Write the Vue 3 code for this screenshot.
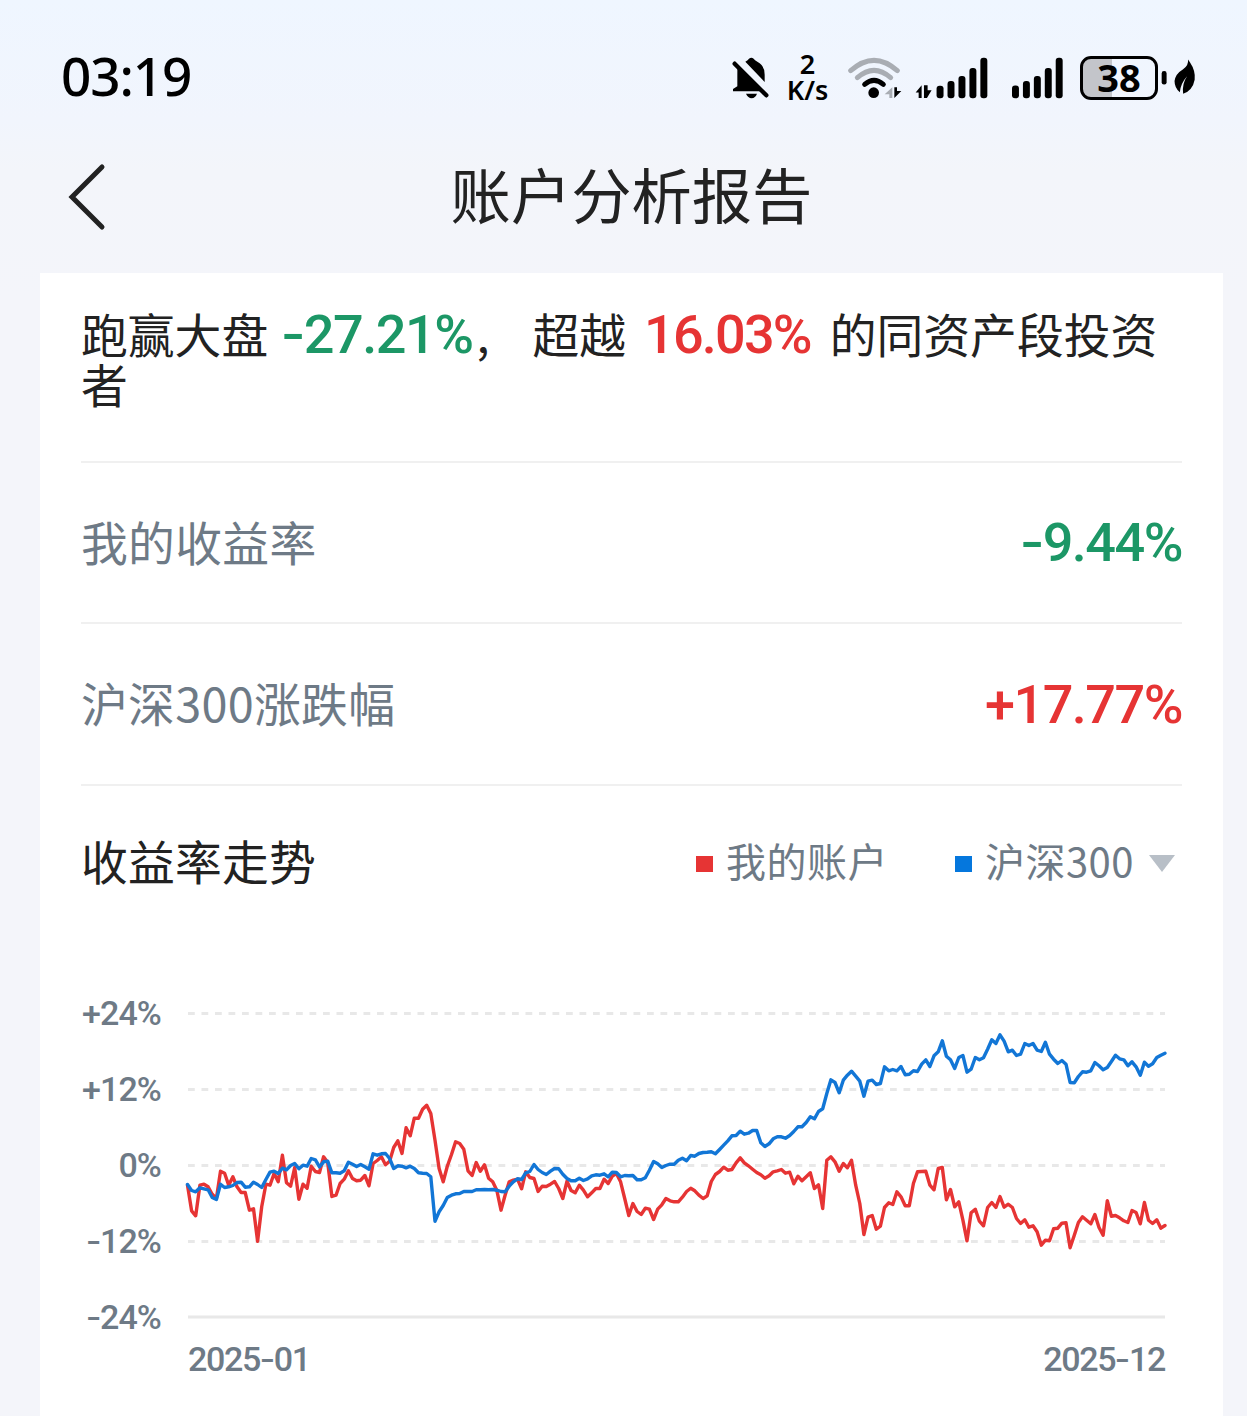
<template>
  <div class="page">
    <div class="status-bar">
      <div class="clock">03:19</div>
      <div class="status-icons">
        <svg class="bell" viewBox="36 48 114 132">
          <path d="M54 76 L128 148 V154 H39 V147 L52 139 V108 Q51 90 54 76Z" />
          <path d="M76 65 Q84 61 87 56 Q94 51 101 56 Q104 61 112 65 Q134 76 134 104 V126Z" />
          <path d="M78 161 H111 Q106 174 95 175 Q84 174 78 161Z" />
          <path d="M44 71 L139 166" fill="none" stroke="#000" stroke-width="13" stroke-linecap="round" />
        </svg>
        <div class="net-speed">
          <span>2</span>
          <span>K/s</span>
        </div>
        <svg class="wifi" viewBox="380 48 168 132">
          <g fill="none" stroke-width="15" stroke-linecap="round">
            <path d="M391 92 Q461 30 531 92" stroke="#a9adb3" />
            <path d="M411 113 Q461 69 511 113" stroke="#a9adb3" />
            <path d="M433 133 Q461 109 489 133" stroke="#000" />
          </g>
          <circle cx="460" cy="158" r="16" />
          <path d="M516 142 V174 H507 V163 H493Z" fill="#a9adb3" />
          <path d="M522 174 V142 H530 V153 H543Z" />
        </svg>
        <svg class="signal-data" viewBox="586 48 220 132">
          <path d="M606 136 V174 H597 V158 H588Z" />
          <path d="M613 136 H624 V151 H636 L622 174 H613Z" />
          <rect v-for="(top, i) in barTops" :key="i" :x="651 + i * 33" :y="top" width="21" :height="175 - top" rx="9" />
        </svg>
        <svg class="signal" viewBox="128 48 154 132">
          <rect v-for="(top, i) in barTops" :key="i" :x="128 + i * 33" :y="top" width="21" :height="175 - top" rx="9" />
        </svg>
        <div class="battery"><span>38</span></div>
        <svg class="leaf" viewBox="574 48 106 132">
          <rect x="576" y="93" width="15" height="41" rx="7" />
          <path d="M656 58 L662 67 Q679 92 676 119 Q670 151 641 162 Q637 132 653 109 Q634 130 631 157 Q615 144 615 123 Q618 101 640 88 Q658 77 656 58Z" />
        </svg>
      </div>
    </div>

    <div class="nav-bar">
      <svg class="back" viewBox="0 0 40 68">
        <path d="M35 4 L5 34 L35 64" />
      </svg>
      <h1>账户分析报告</h1>
    </div>

    <div class="card">
      <div class="summary">
        <span>跑赢大盘</span>
        <span class="num down beat"><i class="minus">-</i>27.21%</span>
        <span class="comma">,</span>
        <span class="exceed">超越</span>
        <span class="num up rank">16.03%</span>
        <span>的同资产段投资</span>
        <span>者</span>
      </div>

      <div class="row">
        <span class="label">我的收益率</span>
        <span class="num down"><i class="minus">-</i>9.44%</span>
      </div>
      <div class="row">
        <span class="label">沪深300涨跌幅</span>
        <span class="num up">+17.77%</span>
      </div>

      <div class="chart-head">
        <h2>收益率走势</h2>
        <div class="legend">
          <i class="dot red"></i>
          <span>我的账户</span>
          <i class="dot blue"></i>
          <span>沪深300</span>
          <svg class="arrow" viewBox="0 0 26 17"><path d="M0 0 H26 L13 17Z" /></svg>
        </div>
      </div>

      <div class="chart">
        <div class="y-axis">
          <span v-for="t in ticks" :key="t"><i v-if="t[0] === '-'" class="minus">-</i>{{ t.replace('-', '') }}</span>
        </div>
        <div class="plot">
          <svg viewBox="0 0 984 330">
            <line v-for="n in 4" :key="n" x1="4" x2="981" :y1="n * 76 - 62.5" :y2="n * 76 - 62.5" class="grid dashed" />
            <line x1="4" x2="981" y1="317" y2="317" class="grid" />
            <polyline :points="toPoints(myAccount)" stroke="#e63434" />
            <polyline :points="toPoints(csi300)" stroke="#1276d6" />
          </svg>
          <div class="x-axis">
            <span>2025<i class="dash">-</i>01</span>
            <span>2025<i class="dash">-</i>12</span>
          </div>
        </div>
      </div>
    </div>
  </div>
</template>

<script setup>
const barTops = [137, 123, 108, 84, 53]
const ticks = ['+24%', '+12%', '0%', '-12%', '-24%']

// 每段数据带自己的零轴, 19 个单位 = 1%
const myAccount = [
  {
    zero: 226,
    data: [
      285, 362, 377, 285, 282, 290, 312, 325, 243, 249, 285, 260, 290, 307, 307, 360, 356, 453, 350, 282,
      285, 250, 275, 195, 278, 288, 232, 327, 282, 294, 228, 244, 247, 200, 217, 319, 315, 280, 267, 242,
      265, 272, 270, 256, 287, 220, 211, 200, 224, 213, 172, 152, 190, 113, 137, 84, 84, 57, 45,
      70, 150, 235, 275, 228, 193, 155, 160, 177, 242, 256, 217, 243, 224, 264, 275, 300, 360, 315, 275,
      270, 267, 296, 245, 262, 265, 304, 288, 289, 282, 274, 295, 325, 273, 301, 308, 285, 300, 320, 308,
      295, 295, 267, 280, 258, 250, 275, 325, 376, 340, 364, 373, 354, 357
    ]
  },
  {
    zero: 316,
    data: [
      478, 447, 434, 415, 422, 425, 425, 411, 394, 384, 392, 405, 415, 407, 364, 343, 334, 321, 330, 328,
      308, 293, 308, 317, 327, 337, 344, 354, 347, 335, 332, 328, 339, 336, 371, 348, 362, 350, 338, 385,
      374, 445, 300, 290, 305, 333, 310, 323, 300, 375, 430, 523, 471, 466, 507, 498, 442, 428, 433
    ]
  },
  {
    zero: 436,
    data: [
      515, 530, 557, 557, 490, 455, 454, 453, 495, 509, 445, 442, 539, 508, 560, 545, 600, 662, 578, 567,
      603, 617, 562, 547, 562, 529, 561, 552, 562, 595, 610, 599, 621, 617, 635, 675, 660, 662, 626, 624,
      609, 608, 683, 645, 607, 590, 600, 611, 583, 622, 645, 542, 588, 586, 593, 602, 607, 571, 577, 611,
      547, 600, 610, 599, 624, 616
    ]
  }
]

const csi300 = [
  {
    zero: 226,
    data: [
      283, 301, 305, 293, 296, 299, 322, 328, 282, 292, 290, 286, 277, 276, 291, 290, 276, 283, 292, 268,
      246, 243, 250, 234, 239, 226, 220, 236, 225, 228, 205, 209, 230, 215, 213, 248, 248, 249, 242, 216,
      222, 229, 223, 230, 237, 191, 195, 191, 190, 205, 235, 227, 228, 233, 228, 235, 248, 249, 250,
      260, 393, 365, 346, 322, 315, 311, 310, 304, 304, 304, 299, 299, 298, 299, 298, 300, 304, 305, 288,
      275, 266, 268, 248, 244, 223, 238, 247, 253, 243, 235, 236, 252, 265, 272, 272, 264, 271, 266, 257,
      254, 255, 251, 260, 246, 247, 260, 256, 257, 256, 269, 269, 263, 240
    ]
  },
  {
    zero: 316,
    data: [
      304, 311, 322, 316, 312, 312, 300, 294, 302, 286, 288, 280, 277, 276, 275, 281, 268, 255, 242, 227,
      226, 213, 222, 219, 211, 211, 248, 259, 251, 236, 230, 230, 234, 226, 214, 200, 200, 187, 170, 176,
      154, 146, 100, 59, 67, 98, 60, 45, 33, 48, 63, 108, 63, 60, 73, 70, 20, 32, 28
    ]
  },
  {
    zero: 436,
    data: [
      152, 139, 164, 162, 152, 154, 132, 119, 139, 107, 95, 62, 108, 119, 145, 112, 106, 156, 147, 112,
      119, 113, 87, 59, 70, 44, 63, 95, 90, 106, 102, 70, 76, 70, 90, 94, 66, 102, 117, 130,
      121, 132, 187, 188, 169, 155, 156, 152, 127, 137, 149, 142, 124, 105, 116, 119, 137, 125, 140, 165,
      126, 138, 131, 112, 105, 99
    ]
  }
]

// 拼成折线坐标, 横向均分
const toPoints = (parts) => {
  const values = parts.flatMap((p) => p.data.map((v) => v - p.zero))
  const step = 977.5 / (values.length - 1)
  return values.map((v, i) => `${(3.5 + i * step).toFixed(1)},${(165.5 + v / 3).toFixed(1)}`).join(' ')
}
</script>

<style>
body {
  margin: 0;
}
</style>

<style scoped>
.page {
  height: 1416px;
  overflow: hidden;
  background: linear-gradient(#eff6ff 0, #f1f5fd 120px, #f3f5fa 170px, #f4f5fa 300px);
  font-family: 'Noto Sans CJK SC', sans-serif;
  color: #222;
}

i {
  font-style: normal;
}

h1,
h2 {
  margin: 0;
  font-weight: 400;
}

svg {
  display: block;
}

.status-bar {
  display: flex;
  justify-content: space-between;
  height: 140px;
  padding: 0 51px 0 61px;
  box-sizing: border-box;
  color: #000;
  font-family: 'Noto Sans', sans-serif;
}

.clock {
  padding-top: 40px;
  font-size: 53px;
  line-height: 72px;
  font-weight: 500;
  letter-spacing: -1.1px;
}

.status-icons {
  display: flex;
  height: 44px;
  padding-top: 56px;
}

.status-icons svg {
  height: 44px;
}

.bell {
  width: 38px;
}

.net-speed {
  display: flex;
  flex-direction: column;
  align-items: center;
  width: 43px;
  margin: -5px 0 0 16px;
  font-size: 27px;
  line-height: 25.5px;
  font-weight: 600;
}

.wifi {
  width: 56px;
  margin-left: 18px;
}

.signal-data {
  width: 73px;
  margin-left: 12px;
}

.signal {
  width: 51px;
  margin-left: 24px;
}

.battery {
  display: flex;
  justify-content: center;
  box-sizing: border-box;
  width: 78px;
  height: 44px;
  margin-left: 17px;
  border: 3px solid #000;
  border-radius: 11px;
  background: linear-gradient(90deg, #c3c5ca 29px, transparent 29px);
  font-size: 38px;
  line-height: 36px;
  font-weight: 700;
}

.leaf {
  width: 35px;
  margin-left: 3px;
}

.nav-bar {
  display: grid;
  grid-template-columns: 40px 1fr 40px;
  align-items: start;
  height: 133px;
  padding: 13px 51px 0 67px;
  box-sizing: border-box;
}

.back {
  width: 40px;
  height: 68px;
  margin-top: 10px;
}

.back path {
  fill: none;
  stroke: #222;
  stroke-width: 5;
  stroke-linecap: round;
}

.nav-bar h1 {
  font-size: 60.3px;
  line-height: 80px;
  text-align: center;
}

.card {
  height: 1143px;
  margin: 0 24px 0 40px;
  padding: 0 41px;
  box-sizing: border-box;
  background: #fff;
}

.summary {
  display: flex;
  flex-wrap: wrap;
  align-items: baseline;
  align-content: flex-start;
  height: 190px;
  padding-top: 36px;
  box-sizing: border-box;
  border-bottom: 2px solid #f0f0f0;
  font-size: 46.8px;
  line-height: 47px;
}

.num {
  font-family: Roboto, sans-serif;
  font-size: 54px;
  line-height: 49px;
  font-weight: 500;
  letter-spacing: -1.5px;
}

.minus {
  display: inline-block;
  width: 0.42em;
  text-align: center;
  transform: scaleX(1.25);
}

.dash {
  display: inline-block;
  width: 0.4em;
  text-align: center;
  transform: scaleX(1.25);
}

.up {
  color: #e63434;
}

.down {
  color: #1c9766;
}

.beat {
  margin-left: 13px;
}

.comma {
  margin-left: 4px;
}

.exceed {
  margin-left: 43px;
}

.rank {
  margin: 0 19px 0 18px;
  letter-spacing: -1.8px;
}

.row {
  display: flex;
  align-items: center;
  justify-content: space-between;
  height: 161.4px;
  box-sizing: border-box;
  border-bottom: 2px solid #f0f0f0;
  color: #6e7a86;
}

.label {
  padding-bottom: 5px;
  font-size: 46.8px;
  letter-spacing: 0.3px;
}

.chart-head {
  display: flex;
  align-items: center;
  justify-content: space-between;
  height: 152px;
  padding-right: 7px;
}

.chart-head h2 {
  padding-bottom: 4px;
  font-size: 46.8px;
  letter-spacing: 0.2px;
}

.legend {
  display: flex;
  align-items: center;
  color: #6e7a86;
  font-size: 40px;
  letter-spacing: 0.5px;
}

.legend span {
  padding-bottom: 4px;
}

.dot {
  width: 17px;
  height: 16px;
  margin: 4px 13px 0 0;
}

.red {
  background: #e63434;
}

.blue {
  margin-left: 67px;
  background: #0577dd;
}

.arrow {
  width: 26px;
  height: 17px;
  margin: 4px 0 0 15px;
  fill: #b8bfc7;
}

.chart {
  display: flex;
  padding-top: 62px;
  color: #6e7a86;
  font-family: Roboto, sans-serif;
  font-size: 34px;
  font-weight: 500;
}

.y-axis {
  display: flex;
  flex-direction: column;
  width: 80px;
  margin-top: -25px;
  text-align: right;
  white-space: nowrap;
}

.y-axis span {
  height: 76px;
  line-height: 76px;
  letter-spacing: -0.9px;
}

.plot {
  width: 984px;
  margin-left: 23px;
}

.plot svg {
  width: 984px;
  height: 330px;
}

.grid {
  stroke: #e8e8e8;
  stroke-width: 3;
}

.dashed {
  stroke-dasharray: 6.75 6.75;
}

polyline {
  fill: none;
  stroke-width: 3.4;
  stroke-linejoin: round;
  stroke-linecap: round;
}

.x-axis {
  display: flex;
  justify-content: space-between;
  padding: 9px 3px 0 4px;
  line-height: 40px;
  letter-spacing: -1.3px;
}
</style>
